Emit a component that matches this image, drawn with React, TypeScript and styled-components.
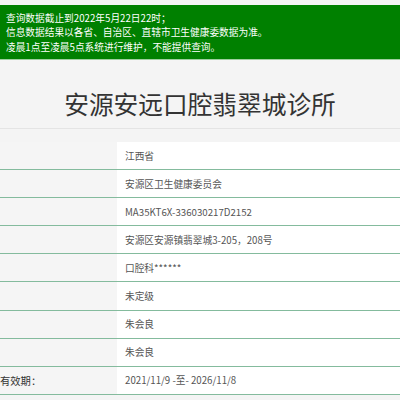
import React from "react";
import styled, { createGlobalStyle } from "styled-components";

const Global = createGlobalStyle`
  html, body {
    margin: 0;
    padding: 0;
    background: #f4f4f4;
    font-family: "Noto Sans CJK SC", "Noto Sans", sans-serif;
    overflow: hidden;
  }
`;

const Page = styled.div`
  width: 400px;
  height: 400px;
  padding-top: 5px;
  box-sizing: border-box;
  overflow: hidden;
`;

const Banner = styled.div`
  background: #008000;
  color: #ffffff;
  font-size: 9.7px;
  line-height: 14.5px;
  padding: 5.5px 6px 5px;
  border-bottom: 1px solid #9fcf9f;
`;

const TitleBar = styled.div`
  height: 69px;
  display: flex;
  align-items: center;
  justify-content: center;
  padding-top: 18px;
  box-sizing: border-box;
  border-bottom: 1px solid #e4e4e4;
`;

const Title = styled.h1`
  margin: 0;
  font-weight: 400;
  font-size: 24.7px;
  line-height: 30px;
  color: #333333;
`;

const Table = styled.div`
  margin-top: 13px;
  display: flex;
  flex-direction: column;
`;

const Row = styled.div`
  display: grid;
  grid-template-columns: 117px 1fr;
  height: 28.1px;
  box-sizing: border-box;
  border-bottom: 1.5px solid #84bb9d;
`;

const Label = styled.div`
  background: #f5f5f5;
  color: #333333;
  font-size: 10.3px;
  display: flex;
  align-items: center;
  white-space: nowrap;
  overflow: hidden;
`;

const Value = styled.div`
  background: #ffffff;
  color: #555555;
  font-size: 9.7px;
  display: flex;
  align-items: center;
  padding-left: 8px;
  white-space: nowrap;
`;

const rows: [string, string][] = [
  ["", "江西省"],
  ["", "安源区卫生健康委员会"],
  ["", "MA35KT6X-336030217D2152"],
  ["", "安源区安源镇翡翠城3-205，208号"],
  ["", "口腔科******"],
  ["", "未定级"],
  ["", "朱会良"],
  ["", "朱会良"],
  ["有效期：", "2021/11/9 -至- 2026/11/8"],
];

export default function App() {
  return (
    <>
      <Global />
      <Page>
        <Banner>
          <div>查询数据截止到2022年5月22日22时；</div>
          <div>信息数据结果以各省、自治区、直辖市卫生健康委数据为准。</div>
          <div>凌晨1点至凌晨5点系统进行维护，不能提供查询。</div>
        </Banner>
        <TitleBar>
          <Title>安源安远口腔翡翠城诊所</Title>
        </TitleBar>
        <Table>
          {rows.map(([l, v], i) => (
            <Row key={i}>
              <Label>{l}</Label>
              <Value>{v}</Value>
            </Row>
          ))}
        </Table>
      </Page>
    </>
  );
}
